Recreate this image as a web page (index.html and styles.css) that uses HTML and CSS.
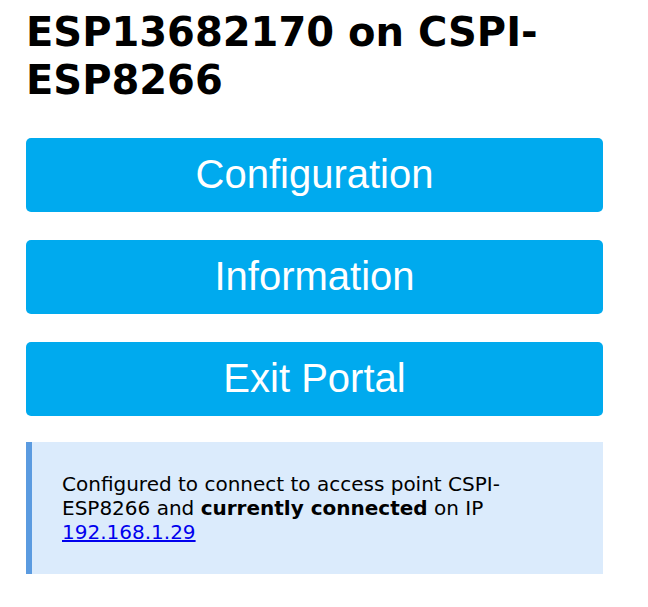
FILE: index.html
```html
<!DOCTYPE html>
<html lang="en">
<head>
<meta charset="utf-8">
<title>ESP13682170 on CSPI-ESP8266</title>
<link rel="stylesheet" href="styles.css">
</head>
<body>
<div class="wrap">
  <h1 class="title">ESP13682170 on CSPI-ESP8266</h1>
  <div class="menu">
    <button class="btn">Configuration</button>
    <button class="btn">Information</button>
    <button class="btn">Exit Portal</button>
  </div>
  <div class="msg">
    <p class="msg-text">Configured to connect to access point CSPI-ESP8266 and <strong>currently connected</strong> on IP <a href="#">192.168.1.29</a></p>
  </div>
</div>
</body>
</html>
```

FILE: styles.css
```css
html, body {
  margin: 0;
  padding: 0;
  background: #ffffff;
}
body {
  font-family: "DejaVu Sans", Verdana, sans-serif;
  color: #000000;
}
.wrap {
  width: 577px;
  margin-left: 26px;
  padding-top: 8px;
}
.title {
  margin: 0 0 34px 0;
  font-size: 40px;
  line-height: 48px;
  font-weight: bold;
}
.menu {
  display: flex;
  flex-direction: column;
  gap: 28.4px;
}
.btn {
  display: block;
  width: 100%;
  height: 73.6px;
  padding: 0;
  border: 0;
  border-radius: 5px;
  background-color: #00aaee;
  color: #ffffff;
  font-family: "Liberation Sans", Arial, sans-serif;
  font-size: 40px;
  line-height: 73.6px;
  text-align: center;
}
.msg {
  margin-top: 26.4px;
  background: #dbebfc;
  border-left: 6px solid #5b9be0;
  padding: 30px;
}
.msg-text {
  margin: 0;
  font-size: 20px;
  line-height: 24px;
}
.msg-text a {
  color: #0000ee;
}
```
